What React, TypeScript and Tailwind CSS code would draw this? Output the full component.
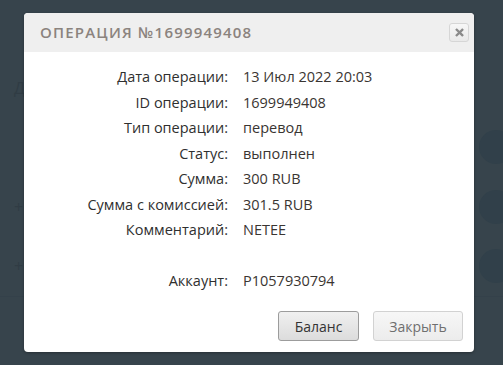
import React from 'react';

const rows: { label: string; value: string }[] = [
  { label: 'Дата операции:', value: '13 Июл 2022 20:03' },
  { label: 'ID операции:', value: '1699949408' },
  { label: 'Тип операции:', value: 'перевод' },
  { label: 'Статус:', value: 'выполнен' },
  { label: 'Сумма:', value: '300 RUB' },
  { label: 'Сумма с комиссией:', value: '301.5 RUB' },
  { label: 'Комментарий:', value: 'NETEE' },
  { label: '', value: '' },
  { label: 'Аккаунт:', value: 'P1057930794' },
];

// faint rows of the page that sits under the dialog
const bgRows = ['Д', '', '+ 2', '+ 1'];

const BackgroundRows: React.FC = () => (
  <div className="flex flex-col pt-[58px] text-[#303c44] text-[16px]" style={{ fontFamily: '"Open Sans", sans-serif' }}>
    {bgRows.map((t, i) => (
      <div key={i} className="h-[59.5px] flex items-center justify-between pl-[14px]">
        <span>{t}</span>
        {i > 0 && <span className="w-[34px] h-[34px] rounded-full bg-[#31404a] -mr-[10px]" />}
      </div>
    ))}
    <div className="h-px bg-[#34414a]" />
  </div>
);

export default function App() {
  return (
    <div className="relative w-[503px] h-[365px] overflow-hidden bg-[#37444c]">
      <BackgroundRows />

      <div
        className="absolute left-[24px] top-[13px] w-[450px] h-[339px] bg-white rounded-[4px] flex flex-col overflow-hidden shadow-[0_1px_3px_rgba(0,0,0,0.3)]"
        style={{ fontFamily: '"Open Sans", "Noto Sans", sans-serif' }}
      >
        <div className="h-[39px] bg-[#efefef] flex items-center justify-between pl-[16px] pr-[5px]">
          <h3 className="text-[15px] font-semibold tracking-[1.2px] text-[#8b837e] uppercase">
            Операция №1699949408
          </h3>
          <button className="w-[20px] h-[19px] rounded-[3px] border border-[#d6d6d6] bg-gradient-to-b from-[#f7f7f7] to-[#e9e9e9] flex items-center justify-center">
            <svg width="9" height="9" viewBox="0 0 10 10">
              <path d="M2 2 L8 8 M8 2 L2 8" stroke="#8a8a8a" strokeWidth="2.6" strokeLinecap="square" />
            </svg>
          </button>
        </div>

        <div className="grid grid-cols-[204px_1fr] gap-x-[15px] pt-[12px] text-[14.5px] font-medium text-[#2f2f2f]">
          {rows.map((r, i) => (
            <React.Fragment key={i}>
              <div className="h-[25.5px] leading-[25.5px] text-right whitespace-nowrap">{r.label}</div>
              <div className="h-[25.5px] leading-[25.5px] text-[#3a3532] whitespace-nowrap">{r.value}</div>
            </React.Fragment>
          ))}
        </div>

        <div className="mt-auto flex justify-end gap-[14px] pr-[11px] pb-[11px]">
          <button className="w-[81px] h-[30px] rounded-[3px] border border-[#9c9c9c] bg-gradient-to-b from-[#f0f0f0] to-[#dcdcdc] text-[14px] text-[#333]">
            Баланс
          </button>
          <button className="w-[90px] h-[30px] rounded-[3px] border border-[#d2d2d2] bg-gradient-to-b from-[#f7f7f7] to-[#ececec] text-[14px] text-[#6f6f6f]">
            Закрыть
          </button>
        </div>
      </div>
    </div>
  );
}
